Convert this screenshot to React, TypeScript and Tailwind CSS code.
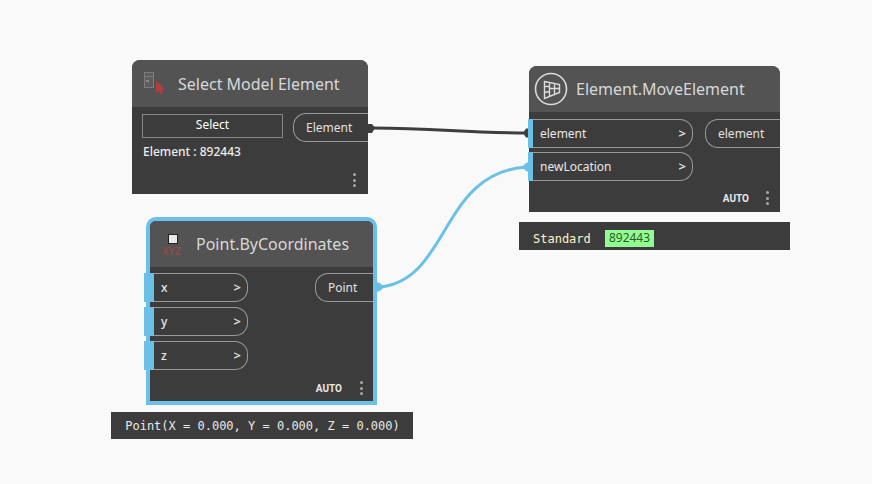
const font = { fontFamily: '"Noto Sans", "Open Sans", sans-serif' };
const auto = { fontFamily: 'Roboto, sans-serif' };

function Dots() {
  return (
    <div className="flex flex-col gap-[2.5px] w-[3px]">
      <div className="w-[3px] h-[3px] rounded-full bg-[#a8a8a8]" />
      <div className="w-[3px] h-[3px] rounded-full bg-[#a8a8a8]" />
      <div className="w-[3px] h-[3px] rounded-full bg-[#a8a8a8]" />
    </div>
  );
}

function InPort({ label, w, bar }: { label: string; w: string; bar: string }) {
  return (
    <div className={`relative h-[29px] ${w} border border-l-0 border-[#9a9a9a] rounded-r-[13px] flex items-center justify-between pr-[6px] pl-[11px] text-[12px] text-[#e8e8e8]`}>
      <div className={`absolute top-[-1px] bottom-[-1px] bg-[#6ac0e7] ${bar}`} />
      <span className={label.length === 1 ? 'font-medium' : ''}>{label}</span>
      <span className="font-bold text-[13px] text-[#d8d8d8]">&gt;</span>
    </div>
  );
}

function OutPort({ label, w }: { label: string; w: string }) {
  return (
    <div className={`h-[29px] ${w} border border-r-0 border-[#9a9a9a] rounded-l-[13px] flex items-center pl-[12px] text-[12px] text-[#e0e0e0]`}>
      {label}
    </div>
  );
}

export default function App() {
  return (
    <div className="relative w-[872px] h-[484px] overflow-hidden bg-[#f9f9f9]" style={font}>
      {/* Wires */}
      <svg className="absolute left-0 top-0" width="872" height="484" fill="none">
        <path d="M372 128 C 440 128, 460 133, 527 133" stroke="#3e3e3e" strokeWidth="3" />
        <path d="M368 124 L372 124 L375 128 L372 133 L368 133 Z" fill="#3e3e3e" />
        <path d="M529 128.5 L526 128.5 L523 133 L526 137.5 L529 137.5 Z" fill="#3e3e3e" />
        <path d="M380 287 C 450 280, 440 172, 527 167" stroke="#6ac0e7" strokeWidth="3" />
        <path d="M376 282 L380 283 L384 287 L380 291 L376 292 Z" fill="#6ac0e7" />
        <path d="M529 162 L526 163 L522 167 L526 171 L529 172 Z" fill="#6ac0e7" />
      </svg>

      {/* Select Model Element */}
      <div className="absolute left-[132px] top-[60px] w-[236px] h-[134px] bg-[#3c3c3c] rounded-t-[8px] flex flex-col">
        <div className="h-[47px] shrink-0 bg-[#535353] rounded-t-[8px] flex items-center pl-[11px]">
          <svg width="24" height="24" viewBox="0 0 24 24" fill="none" className="mr-[11px] mt-[-2px]">
            <rect x="1.5" y="1.5" width="9" height="15" fill="#5d5d5d" stroke="#7c7c7c" />
            <path d="M1.5 5.5H10.5" stroke="#7c7c7c" />
            <rect x="3" y="9" width="3" height="2" fill="#8a8a8a" />
            <path d="M13 10L13 22L16 19.5L18 23.5L20 22.5L18.5 18.5L22 18Z" fill="#b93c3c" />
          </svg>
          <span className="text-[16px] text-[#d8d8d8]">Select Model Element</span>
        </div>
        <div className="relative flex-1 pl-[10px] pt-[6px]">
          <div className="flex items-start">
            <div className="w-[141px] h-[24px] mt-px pb-[2px] border border-[#858585] flex items-center justify-center text-[12px] text-white">
              Select
            </div>
            <div className="ml-[10px]"><OutPort label="Element" w="w-[75px]" /></div>
          </div>
          <div className="absolute left-[11px] top-[36px] text-[12px] font-medium text-[#ececec]">Element : 892443</div>
          <div className="absolute right-[12px] bottom-[7px]"><Dots /></div>
        </div>
      </div>

      {/* Element.MoveElement */}
      <div className="absolute left-[529px] top-[66px] w-[251px] h-[146px] bg-[#3c3c3c] rounded-t-[8px] flex flex-col">
        <div className="h-[46px] shrink-0 bg-[#535353] rounded-t-[8px] flex items-center pl-[5px]">
          <svg width="34" height="34" viewBox="0 0 34 34" fill="none" className="mr-[8px]">
            <circle cx="17" cy="17" r="15.5" stroke="#dcdcdc" strokeWidth="1.6" />
            <path d="M10.5 9.5L25.5 12.5V20.5L10.5 26.5Z M15.5 10.5V24.5 M20.5 11.5V22.5 M10.5 14.5H15.5 M15.5 16.5H25.5 M10.5 20.5L15.5 19.5" stroke="#dcdcdc" strokeWidth="1.4" />
          </svg>
          <span className="text-[16px] text-[#d8d8d8]">Element.MoveElement</span>
        </div>
        <div className="flex justify-between pt-[7px] flex-1 relative">
          <div className="flex flex-col gap-[4px]">
            <InPort label="element" w="w-[164px]" bar="left-[-1px] w-[5px]" />
            <InPort label="newLocation" w="w-[164px]" bar="left-[-1px] w-[5px]" />
          </div>
          <OutPort label="element" w="w-[75px]" />
          <div className="absolute right-[31px] top-[79px] text-[10px] font-bold text-[#e8e8e8]" style={auto}>AUTO</div>
          <div className="absolute right-[11px] bottom-[7px]"><Dots /></div>
        </div>
      </div>

      {/* Standard preview */}
      <div className="absolute left-[519px] top-[222px] w-[271px] h-[28px] bg-[#3c3c3c] flex items-center pl-[14px] pt-[5px] text-[12px]" style={{ fontFamily: '"DejaVu Sans Mono", monospace' }}>
        <span className="text-[#fdf3c8] w-[72px]">Standard</span>
        <span className="h-[17px] w-[49px] mt-[-1px] bg-[#90ff90] text-[#2f5a2f] text-[12px] flex items-center justify-center" style={font}>892443</span>
      </div>

      {/* Point.ByCoordinates */}
      <div className="absolute left-[146px] top-[217px] w-[231px] h-[188px] border-[4px] border-[#6ac0e7] bg-[#3c3c3c] rounded-t-[10px] flex flex-col">
        <div className="h-[46px] shrink-0 bg-[#535353] rounded-t-[6px] flex items-center pl-[13px]">
          <div className="flex flex-col items-center mr-[16px] w-[17px] mt-[2px]">
            <div className="w-[10px] h-[10px] bg-[#e8e8e8] border border-[#222] ml-[2px]" />
            <span className="text-[10px] leading-[10px] mt-[3px] font-bold text-[#8a4b4b]" style={auto}>XYZ</span>
          </div>
          <span className="text-[16px] text-[#d8d8d8]">Point.ByCoordinates</span>
        </div>
        <div className="flex justify-between pt-[6px] flex-1 relative">
          <div className="flex flex-col gap-[5px]">
            <InPort label="x" w="w-[98px]" bar="left-[-6px] w-[10px]" />
            <InPort label="y" w="w-[98px]" bar="left-[-6px] w-[10px]" />
            <InPort label="z" w="w-[98px]" bar="left-[-6px] w-[10px]" />
          </div>
          <OutPort label="Point" w="w-[58px]" />
          <div className="absolute right-[31px] top-[114px] text-[10px] font-bold text-[#e8e8e8]" style={auto}>AUTO</div>
          <div className="absolute right-[10px] bottom-[6px]"><Dots /></div>
        </div>
      </div>

      {/* Point preview */}
      <div className="absolute left-[111px] top-[412px] w-[302px] h-[27px] pl-[1px] bg-[#3c3c3c] flex items-center justify-center text-[12px] text-[#e8e8e8]" style={{ fontFamily: '"DejaVu Sans Mono", monospace' }}>
        Point(X = 0.000, Y = 0.000, Z = 0.000)
      </div>
    </div>
  );
}
